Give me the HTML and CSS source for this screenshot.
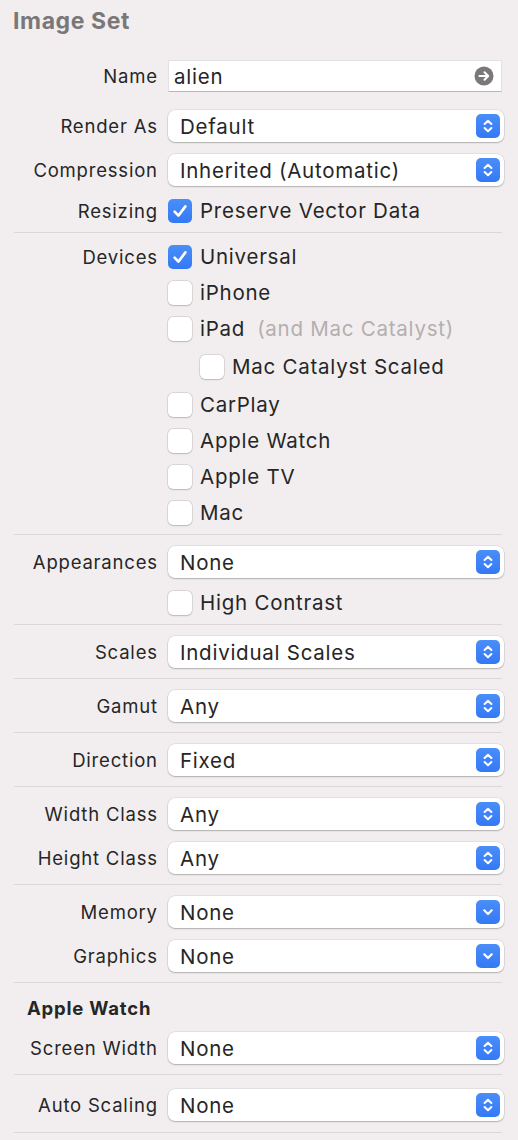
FILE: index.html
```html
<!DOCTYPE html>
<html lang="en">
<head>
  <meta charset="UTF-8" />
  <meta name="viewport" content="width=device-width, initial-scale=1.0" />
  <title>Image Set Inspector</title>
  <link rel="stylesheet" href="styles.css">
</head>
<body>
  <div class="inspector">
    <div class="inspector-title">Image Set</div>

    <section class="group group-top">
      <div class="row row-name">
        <div class="label">Name</div>
        <div class="text-field">
          <span>alien</span>
          <svg class="go-icon" width="20" height="20" viewBox="0 0 20 20">
            <circle cx="10" cy="10" r="9.5" fill="#7b7879" />
            <path d="M5.5 10 H14 M10.5 6.3 L14.2 10 L10.5 13.7" stroke="#fff" stroke-width="2.1" fill="none" stroke-linecap="round" stroke-linejoin="round" />
          </svg>
        </div>
      </div>
      <div class="row">
        <div class="label">Render As</div>
        <div class="popup"><span>Default</span><span class="stepper"></span></div>
      </div>
      <div class="row">
        <div class="label">Compression</div>
        <div class="popup"><span>Inherited (Automatic)</span><span class="stepper"></span></div>
      </div>
      <div class="row row-check">
        <div class="label">Resizing</div>
        <div class="check on">Preserve Vector Data</div>
      </div>
    </section>

    <section class="group">
      <div class="row row-check">
        <div class="label">Devices</div>
        <div class="check on">Universal</div>
      </div>
      <div class="row row-check">
        <div class="label"></div>
        <div class="check">iPhone</div>
      </div>
      <div class="row row-check">
        <div class="label"></div>
        <div class="check">iPad <span class="hint">(and Mac Catalyst)</span></div>
      </div>
      <div class="row row-check row-sub">
        <div class="label"></div>
        <div class="check indent">Mac Catalyst Scaled</div>
      </div>
      <div class="row row-check row-after-sub">
        <div class="label"></div>
        <div class="check">CarPlay</div>
      </div>
      <div class="row row-check">
        <div class="label"></div>
        <div class="check">Apple Watch</div>
      </div>
      <div class="row row-check">
        <div class="label"></div>
        <div class="check">Apple TV</div>
      </div>
      <div class="row row-check">
        <div class="label"></div>
        <div class="check">Mac</div>
      </div>
    </section>

    <section class="group">
      <div class="row">
        <div class="label">Appearances</div>
        <div class="popup"><span>None</span><span class="stepper"></span></div>
      </div>
      <div class="row row-check">
        <div class="label"></div>
        <div class="check">High Contrast</div>
      </div>
    </section>

    <section class="group">
      <div class="row">
        <div class="label">Scales</div>
        <div class="popup"><span>Individual Scales</span><span class="stepper"></span></div>
      </div>
    </section>

    <section class="group">
      <div class="row">
        <div class="label">Gamut</div>
        <div class="popup"><span>Any</span><span class="stepper"></span></div>
      </div>
    </section>

    <section class="group">
      <div class="row">
        <div class="label">Direction</div>
        <div class="popup"><span>Fixed</span><span class="stepper"></span></div>
      </div>
    </section>

    <section class="group">
      <div class="row">
        <div class="label">Width Class</div>
        <div class="popup"><span>Any</span><span class="stepper"></span></div>
      </div>
      <div class="row">
        <div class="label">Height Class</div>
        <div class="popup"><span>Any</span><span class="stepper"></span></div>
      </div>
    </section>

    <section class="group">
      <div class="row">
        <div class="label">Memory</div>
        <div class="popup"><span>None</span><span class="stepper pulldown"></span></div>
      </div>
      <div class="row">
        <div class="label">Graphics</div>
        <div class="popup"><span>None</span><span class="stepper pulldown"></span></div>
      </div>
    </section>

    <section class="group">
      <div class="group-heading">Apple Watch</div>
      <div class="row">
        <div class="label">Screen Width</div>
        <div class="popup"><span>None</span><span class="stepper"></span></div>
      </div>
    </section>

    <section class="group group-last">
      <div class="row">
        <div class="label">Auto Scaling</div>
        <div class="popup"><span>None</span><span class="stepper"></span></div>
      </div>
    </section>
  </div>
</body>
</html>
```

FILE: styles.css
```css
:root {
  --bg: #f2eeef;
  --text: #262626;
  --muted: #b3afb0;
  --rule: #dbd7d8;
  --blue: #3b82f7;
  --label-width: 157px;
  --gap: 11px;
}

body {
  margin: 0;
  padding: 0;
  background: var(--bg);
  color: var(--text);
  font-family: Inter, 'Noto Sans', sans-serif;
  font-size: 18.5px;
  letter-spacing: 0.8px;
}

.inspector {
  width: 518px;
}

.inspector-title {
  padding: 7px 13px 0;
  height: 60px;
  box-sizing: border-box;
  font-size: 23px;
  letter-spacing: 0.6px;
  font-weight: 700;
  color: #7a7778;
}

.group {
  display: flex;
  flex-direction: column;
  gap: 12px;
  margin: 0 16px 0 14px;
  padding: 11px 0 10px;
  border-bottom: 1px solid var(--rule);
}

.group-top {
  padding-top: 0;
}

.group-last {
  padding-top: 14px;
  padding-bottom: 11px;
}

.row {
  display: grid;
  grid-template-columns: calc(var(--label-width) - 14px) 1fr;
  column-gap: var(--gap);
  align-items: center;
  height: 32px;
  margin-right: -2px;
}

.row-name {
  margin-bottom: 6px;
}

.row-check {
  height: 24px;
}

.row-sub {
  margin-top: 2px;
}

.row-after-sub {
  margin-top: 2px;
}

.label {
  text-align: right;
  white-space: nowrap;
  margin-right: -0.8px;
}

.text-field,
.popup,
.check {
  font-size: 20.5px;
  letter-spacing: 0.75px;
}

.text-field {
  display: flex;
  align-items: center;
  justify-content: space-between;
  height: 32px;
  box-sizing: border-box;
  margin-right: 2px;
  padding: 0 7px 0 5px;
  background: #fff;
  border: 1px solid #e4e1e2;
  border-bottom-color: #b9b6b7;
}

.go-icon {
  display: block;
}

.popup {
  display: flex;
  align-items: center;
  justify-content: space-between;
  height: 32px;
  box-sizing: border-box;
  padding: 0 4px 0 12px;
  background: #fff;
  border-radius: 7px;
  box-shadow: 0 0 0 0.5px rgba(0,0,0,0.12), 0 1px 1.5px rgba(0,0,0,0.22);
}

.stepper {
  width: 24px;
  height: 24px;
  border-radius: 5px;
  background-image: url("data:image/svg+xml,%3Csvg xmlns='http://www.w3.org/2000/svg' width='24' height='24' viewBox='0 0 24 24'%3E%3Cpath d='M8.6 10 L12 6.8 L15.4 10 M8.6 14 L12 17.2 L15.4 14' stroke='white' stroke-width='2' fill='none' stroke-linecap='round' stroke-linejoin='round'/%3E%3C/svg%3E"), linear-gradient(#4a8ef9, #3479f5);
  background-repeat: no-repeat;
  background-position: center;
}

.stepper.pulldown {
  background-image: url("data:image/svg+xml,%3Csvg xmlns='http://www.w3.org/2000/svg' width='24' height='24' viewBox='0 0 24 24'%3E%3Cpath d='M8.3 10.3 L12 14 L15.7 10.3' stroke='white' stroke-width='2.2' fill='none' stroke-linecap='round' stroke-linejoin='round'/%3E%3C/svg%3E"), linear-gradient(#4a8ef9, #3479f5);
}

.check {
  grid-column: 2;
  display: flex;
  align-items: center;
  gap: 8px;
  white-space: nowrap;
}

.check::before {
  content: "";
  flex: none;
  width: 24px;
  height: 24px;
  box-sizing: border-box;
  border-radius: 5px;
  background: #fff;
  box-shadow: 0 0 0 0.5px rgba(0,0,0,0.14), 0 0.5px 1.5px rgba(0,0,0,0.16);
}

.check.on::before {
  box-shadow: none;
  background: url("data:image/svg+xml,%3Csvg xmlns='http://www.w3.org/2000/svg' width='24' height='24' viewBox='0 0 24 24'%3E%3Cpath d='M6.6 12.6 L10.4 16.6 L17.4 7.4' stroke='white' stroke-width='2.6' fill='none' stroke-linecap='round' stroke-linejoin='round'/%3E%3C/svg%3E") no-repeat center, linear-gradient(#4a8ef9, #3479f5);
}

.check.indent {
  padding-left: 32px;
}

.hint {
  color: var(--muted);
  margin-left: 4px;
}

.group-heading {
  height: 28px;
  line-height: 28px;
  padding-left: 13px;
  margin-bottom: -2px;
  font-weight: 700;
}
```
